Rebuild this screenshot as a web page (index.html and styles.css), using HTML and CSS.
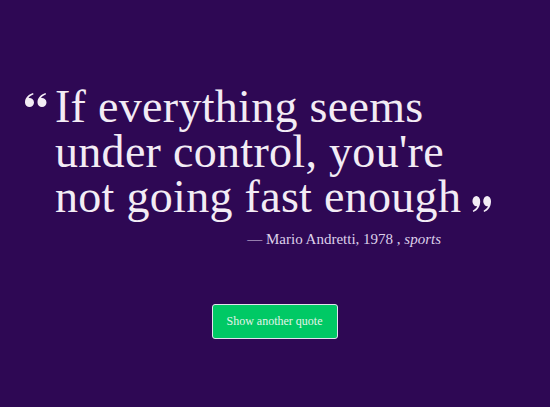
FILE: index.html
```html
<!DOCTYPE html>
<html>
<head>
<meta charset="utf-8">
<link rel="stylesheet" href="styles.css">
</head>
<body>
<main class="machine">
  <section class="quote-box">
    <div class="quote-row">
      <svg class="mark mark-open" viewBox="0 0 22 14" aria-hidden="true">
        <path d="M9,9.5 A4.5,4.5 0 0 1 0,9.5 C0,5 3,1.5 8,0 L8.6,1.2 C5,2.8 3.5,4.5 3.6,5.1 A4.5,4.5 0 0 1 9,9.5 Z"/>
        <path transform="translate(12.5,0)" d="M9,9.5 A4.5,4.5 0 0 1 0,9.5 C0,5 3,1.5 8,0 L8.6,1.2 C5,2.8 3.5,4.5 3.6,5.1 A4.5,4.5 0 0 1 9,9.5 Z"/>
      </svg>
      <p class="quote-text">If everything seems<br>under control, you're<br>not going fast enough<svg class="mark mark-close" viewBox="0 0 22 14" preserveAspectRatio="none" aria-hidden="true"><g transform="rotate(180 11 7)"><path d="M9,9.5 A4.5,4.5 0 0 1 0,9.5 C0,5 3,1.5 8,0 L8.6,1.2 C5,2.8 3.5,4.5 3.6,5.1 A4.5,4.5 0 0 1 9,9.5 Z"/><path transform="translate(12.5,0)" d="M9,9.5 A4.5,4.5 0 0 1 0,9.5 C0,5 3,1.5 8,0 L8.6,1.2 C5,2.8 3.5,4.5 3.6,5.1 A4.5,4.5 0 0 1 9,9.5 Z"/></g></svg></p>
    </div>
    <p class="author">— Mario Andretti, 1978 , <em>sports</em></p>
  </section>
  <div class="actions">
    <button class="new-quote" type="button">Show another quote</button>
  </div>
</main>
</body>
</html>
```

FILE: styles.css
```css
html, body {
  margin: 0;
  padding: 0;
}
body {
  background: #2e0854;
  color: #f3ecf5;
  font-family: "Liberation Serif", "Times New Roman", serif;
  width: 550px;
  height: 407px;
  overflow: hidden;
}
.machine {
  padding-top: 84px;
}
.quote-row {
  display: flex;
  align-items: flex-start;
  padding-left: 25px;
}
.mark {
  fill: #f3ecf5;
  display: block;
}
.mark-open {
  width: 22px;
  height: 14px;
  margin-top: 9px;
  margin-right: 8px;
  flex: none;
}
.quote-text {
  margin: 0;
  font-size: 46px;
  line-height: 45px;
  letter-spacing: 0.3px;
  font-weight: 400;
}
.mark-close {
  display: inline-block;
  width: 19px;
  height: 16px;
  margin-left: 11px;
  vertical-align: 0;
}
.author {
  margin: 10px 0 0;
  font-size: 15px;
  line-height: 20px;
  color: #ddd0ea;
  text-align: right;
  padding-right: 109px;
}
.author em {
  font-style: italic;
}
.actions {
  display: flex;
  justify-content: center;
  padding-top: 55px;
}
.new-quote {
  width: 126px;
  height: 35px;
  background: #00c965;
  border: 1.5px solid #e2e2ee;
  border-radius: 3px;
  color: #e4f3ea;
  font-family: "Liberation Serif", "Times New Roman", serif;
  font-size: 12px;
  padding: 0;
  margin-left: -1px;
}
```
